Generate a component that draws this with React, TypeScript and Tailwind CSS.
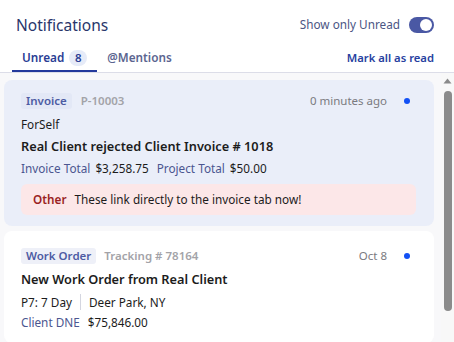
import React from 'react';

const font = { fontFamily: '"Noto Sans", "Open Sans", sans-serif' };

export default function App() {
  return (
    <div style={font} className="w-[454px] h-[342px] overflow-hidden bg-white flex flex-col text-[#1c1c1c]">
      {/* Header */}
      <div className="flex items-center justify-between pl-4 pr-5 pt-[14px]">
        <h1 className="text-[15.5px] leading-[22px] text-[#29366b]">Notifications</h1>
        <div className="flex items-center gap-[9px]">
          <span className="text-[11.75px] text-[#4b5684]">Show only Unread</span>
          <div className="w-[25px] h-[16px] rounded-full bg-[#4a58a4] flex items-center justify-end pr-[2px]">
            <div className="w-[12px] h-[12px] rounded-full bg-white" />
          </div>
        </div>
      </div>

      {/* Tabs */}
      <div className="flex items-end justify-between border-b border-[#dcdde8] pl-3 pr-5 mt-[10px]">
        <div className="flex items-end gap-[10px]">
          <div className="flex items-center gap-[5px] px-[10px] h-[26px] border-b-2 border-[#23399c]">
            <span className="text-[11.75px] font-semibold text-[#2a3d94]">Unread</span>
            <span className="w-[18px] h-[16px] rounded-full bg-[#e6ebf8] text-[11.5px] font-semibold text-[#2a3d94] flex items-center justify-center">8</span>
          </div>
          <div className="flex items-center h-[26px] pb-[2px]">
            <span className="text-[11.75px] font-semibold text-[#5b6590]">@Mentions</span>
          </div>
        </div>
        <button className="h-[26px] pb-[2px] text-[11.25px] font-semibold text-[#2741a0]">Mark all as read</button>
      </div>

      {/* Body */}
      <div className="flex flex-1 min-h-0 bg-[#f8f8fa]">
        <div className="flex-1 flex flex-col gap-[5px] pt-[7px] pl-[4px] pr-[7px]">
          {/* Card 1 */}
          <div className="rounded-[8px] bg-[#eaeef9] pl-[17px] pr-[18px] pt-[12px] pb-[11px]">
            <div className="flex items-center justify-between">
              <div className="flex items-center gap-[9px]">
                <span className="px-[5px] h-[16px] flex items-center rounded-[3px] bg-[#e3e8f6] text-[11.5px] font-semibold text-[#4d5ba3]">Invoice</span>
                <span className="text-[11.5px] font-semibold text-[#a3a3a8]">P-10003</span>
              </div>
              <div className="flex items-center gap-[17px] pr-[6px]">
                <span className="text-[11.5px] text-[#7a7a80]">0 minutes ago</span>
                <span className="w-[6px] h-[6px] rounded-full bg-[#1250f5]" />
              </div>
            </div>
            <div className="text-[11.75px] mt-[6px] leading-[18px]">ForSelf</div>
            <div className="text-[12.75px] font-semibold mt-[4px] leading-[19px]">Real Client rejected Client Invoice # 1018</div>
            <div className="flex items-center gap-[5px] text-[11.75px] mt-[3px] leading-[18px]">
              <span className="text-[#4b5690]">Invoice Total</span>
              <span>$3,258.75</span>
              <span className="text-[#4b5690] ml-[3px]">Project Total</span>
              <span>$50.00</span>
            </div>
            <div className="mt-[7px] rounded-[6px] bg-[#fce7e8] h-[31px] px-[12px] flex items-center gap-[8px] text-[11.75px]">
              <span className="font-semibold text-[#9a1f23]">Other</span>
              <span>These link directly to the invoice tab now!</span>
            </div>
          </div>

          {/* Card 2 */}
          <div className="rounded-[8px] bg-white pl-[17px] pr-[18px] pt-[16px] pb-[12px]">
            <div className="flex items-center justify-between">
              <div className="flex items-center gap-[8px]">
                <span className="px-[5px] h-[16px] flex items-center rounded-[3px] bg-[#eef0f8] text-[11.5px] font-semibold text-[#4d5ba3]">Work Order</span>
                <span className="text-[11.5px] font-semibold text-[#a3a3a8]">Tracking # 78164</span>
              </div>
              <div className="flex items-center gap-[17px] pr-[6px]">
                <span className="text-[11.5px] text-[#7a7a80]">Oct 8</span>
                <span className="w-[6px] h-[6px] rounded-full bg-[#1250f5]" />
              </div>
            </div>
            <div className="text-[12.75px] font-semibold mt-[5px] leading-[19px]">New Work Order from Real Client</div>
            <div className="flex items-center text-[11.75px] mt-[4px] leading-[18px]">
              <span>P7: 7 Day</span>
              <span className="w-px h-[16px] bg-[#d4d6e0] mx-[8px]" />
              <span>Deer Park, NY</span>
            </div>
            <div className="flex items-center gap-[8px] text-[11.75px] mt-[2px] leading-[18px]">
              <span className="text-[#4b5690]">Client DNE</span>
              <span>$75,846.00</span>
            </div>
          </div>
        </div>

        {/* Scrollbar */}
        <div className="w-[13px] bg-[#f8f8f8] flex flex-col items-center pt-[5px]">
          <svg width="9" height="6" viewBox="0 0 9 6">
            <path d="M0.5 5.5 L4.5 0.5 L8.5 5.5 Z" fill="#8a8a8a" />
          </svg>
          <div className="w-[8px] h-[220px] rounded-full bg-[#8b8b8b] mt-[7px]" />
        </div>
      </div>
    </div>
  );
}
